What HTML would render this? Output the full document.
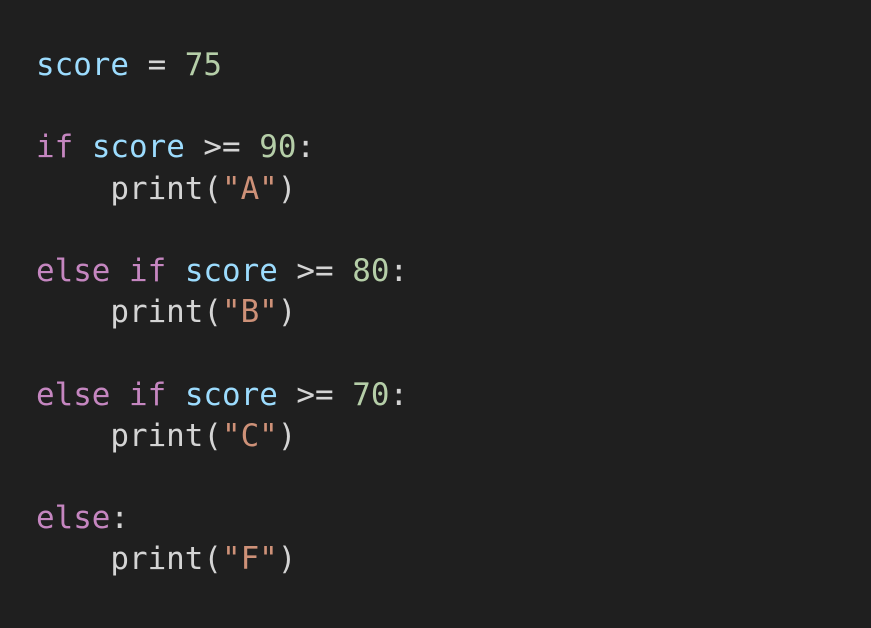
<!DOCTYPE html>
<html><head><style>
html,body{margin:0;padding:0;background:#1f1f1f;}
body{width:871px;height:628px;overflow:hidden;}
pre{margin:0;padding:45px 0 0 36px;font-family:"DejaVu Sans Mono","Liberation Mono",monospace;font-size:30.9px;line-height:41.2px;color:#d4d4d4;}
.v{color:#9cdcfe}.n{color:#b5cea8}.k{color:#c586c0}.s{color:#ce9178}
</style></head><body>
<pre><span class="v">score</span> = <span class="n">75</span>

<span class="k">if</span> <span class="v">score</span> &gt;= <span class="n">90</span>:
    print(<span class="s">"A"</span>)

<span class="k">else</span> <span class="k">if</span> <span class="v">score</span> &gt;= <span class="n">80</span>:
    print(<span class="s">"B"</span>)

<span class="k">else</span> <span class="k">if</span> <span class="v">score</span> &gt;= <span class="n">70</span>:
    print(<span class="s">"C"</span>)

<span class="k">else</span>:
    print(<span class="s">"F"</span>)</pre>
</body></html>
